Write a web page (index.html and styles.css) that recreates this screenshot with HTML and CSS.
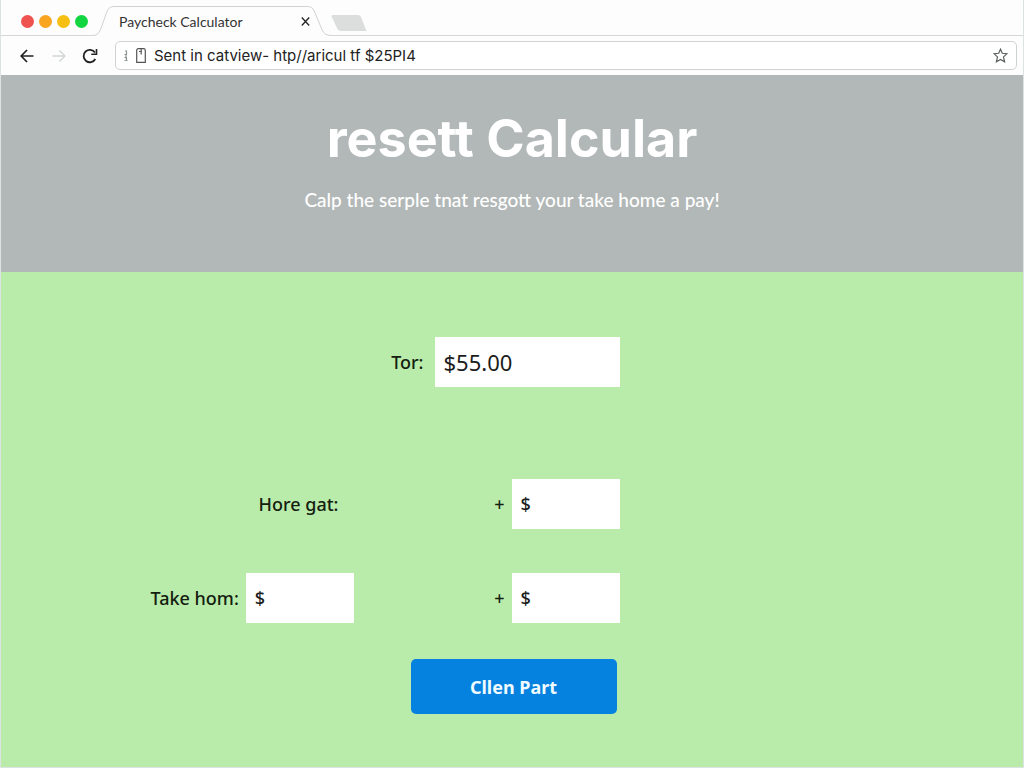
FILE: index.html
```html
<!DOCTYPE html>
<html lang="en">
<head>
<meta charset="utf-8">
<meta name="viewport" content="width=device-width, initial-scale=1">
<title>Paycheck Calculator</title>
<link rel="stylesheet" href="styles.css">
</head>
<body>
<div class="window">
  <div class="tabstrip">
    <div class="lights">
      <span class="light red"></span>
      <span class="light orange"></span>
      <span class="light yellow"></span>
      <span class="light green"></span>
    </div>
    <div class="tab">
      <svg class="tab-shape" viewBox="0 0 242 31" preserveAspectRatio="none" aria-hidden="true">
        <path d="M0 29.500C4 29.500 6 27 7.500 24L14 6Q16 .5 21 .5H218Q223 .5 225 5L233 24Q235.500 29.500 242 29.500V31H0Z" fill="#fdfdfd"/>
        <path d="M0 29.500C4 29.500 6 27 7.500 24L14 6Q16 .5 21 .5H218Q223 .5 225 5L233 24Q235.500 29.500 242 29.500" fill="none" stroke="#cfd1d1"/>
      </svg>
      <span class="tab-title">Paycheck Calculator</span>
      <button class="icon-button tab-close" type="button" aria-label="Close tab">
        <svg width="9" height="9" viewBox="0 0 9 9"><path d="M.8 .5 8.200 8.500M8.200 .5 .8 8.500" stroke="#222" stroke-width="1.300"/></svg>
      </button>
    </div>
    <button class="icon-button new-tab" type="button" aria-label="New tab">
      <svg width="36" height="16" viewBox="0 0 36 16"><path d="M2 0H27Q29 0 30 2L35.500 16H10Q7.500 16 6.500 14L.5 1.500Q0 0 2 0Z" fill="#dcdddd"/></svg>
    </button>
  </div>
  <div class="toolbar">
    <button class="icon-button" type="button" aria-label="Back">
      <svg width="14" height="14" viewBox="0 0 14 14"><path d="M13.500 7H1.500M7 1 1.200 7 7 13" fill="none" stroke="#222" stroke-width="1.700"/></svg>
    </button>
    <button class="icon-button forward" type="button" aria-label="Forward">
      <svg width="14" height="14" viewBox="0 0 14 14"><path d="M.5 7H12.500M7.500 1.500 12.800 7 7.500 12.500" fill="none" stroke="#d3d6d6" stroke-width="1.500"/></svg>
    </button>
    <button class="icon-button reload" type="button" aria-label="Reload">
      <svg width="16" height="16" viewBox="0 0 16 16"><path d="M13.300 11A6.200 6.200 0 1 1 13 4.600" fill="none" stroke="#222" stroke-width="1.800"/><path d="M14.500 1V6.200H9.300" fill="none" stroke="#222" stroke-width="1.600"/></svg>
    </button>
    <div class="address">
      <svg width="4" height="12" viewBox="0 0 4 12" aria-hidden="true"><path d="M1 1H2.500V4.500M2 4V8.500M2.500 8V11M.5 10.500H3.500M.5 4.500H3M.5 7.500H3" fill="none" stroke="#8d9496" stroke-width="1.200"/></svg>
      <svg width="10" height="15" viewBox="0 0 10 15" aria-hidden="true"><path d="M2.500 .7H7.500Q9.300 .7 9.300 2.500V14.300H.7V2.500Q.7 .7 2.500 .7Z" fill="none" stroke="#555" stroke-width="1.200"/><path d="M5.200 1V6.500M3 3.500H5" stroke="#555" stroke-width="1.200" fill="none"/></svg>
      <input class="url" type="text" aria-label="Address" value="Sent in catview- htp//aricul tf $25PI4">
      <button class="icon-button" type="button" aria-label="Bookmark">
        <svg width="15" height="15" viewBox="0 0 15 15"><path d="M7.500 1.200 9.300 5.300 14 5.700 10.500 8.900 11.600 13.700 7.500 11.400 3.400 13.700 4.500 8.900 1 5.700 5.700 5.300Z" fill="none" stroke="#5b5f60" stroke-width="1.200"/></svg>
      </button>
    </div>
  </div>
  <header class="hero">
    <h1 class="hero-title">resett Calcular</h1>
    <p class="hero-text">Calp the serple tnat resgott your take home a pay!</p>
  </header>
  <main class="content">
    <form class="form">
      <div class="row row-first">
        <label class="label" for="tor">Tor:</label>
        <input class="field field-wide" id="tor" type="text" value="$55.00">
      </div>
      <div class="row row-split row-second">
        <label class="label" for="gat">Hore gat:</label>
        <div class="group">
          <span class="label">+</span>
          <input class="field" id="gat" type="text" value="$">
        </div>
      </div>
      <div class="row row-split">
        <div class="group">
          <label class="label" for="take">Take hom:</label>
          <input class="field" id="take" type="text" value="$">
        </div>
        <div class="group">
          <label class="label" for="extra">+</label>
          <input class="field" id="extra" type="text" value="$">
        </div>
      </div>
      <button class="submit" type="button">Cllen Part</button>
    </form>
  </main>
</div>
</body>
</html>
```

FILE: styles.css
```css
* {
  box-sizing: border-box;
}

body {
  margin: 0;
  font-family: "Noto Sans", "Open Sans", sans-serif;
  color: #14200f;
}

.window {
  display: flex;
  flex-direction: column;
  min-height: 100vh;
  border: 1px solid #dde3e0;
  border-top: 0;
  background: #fdfdfd;
}

.icon-button {
  display: flex;
  padding: 0;
  border: 0;
  background: none;
}

.tabstrip {
  display: flex;
  height: 36px;
  padding: 6px 0 0 20px;
  border-bottom: 1px solid #d6d8d8;
}

.lights {
  display: flex;
  align-items: center;
  gap: 5px;
  width: 72px;
  height: 31px;
}

.light {
  width: 13px;
  height: 13px;
  border-radius: 50%;
}

.red { background: #ee5350; }
.orange { background: #f9a51f; }
.yellow { background: #f6c012; }
.green { background: #12d640; }

.tab {
  position: relative;
  display: flex;
  align-items: center;
  justify-content: space-between;
  width: 238px;
  height: 31px;
  padding: 0 21px 0 26px;
}

.tab-shape {
  position: absolute;
  inset: 0;
  width: 100%;
  height: 100%;
}

.tab-title {
  position: relative;
  font-family: Lato, sans-serif;
  font-size: 14px;
  color: #333;
}

.tab-close {
  position: relative;
}

.new-tab {
  align-items: center;
  height: 34px;
}

.toolbar {
  display: flex;
  align-items: center;
  height: 39px;
  padding: 0 6px 0 19px;
}

.forward {
  margin-left: 18px;
}

.reload {
  margin: 0 17px 0 16px;
}

.address {
  display: flex;
  flex: 1;
  align-items: center;
  gap: 8px;
  height: 29px;
  padding: 0 8px;
  border: 1px solid #d0d2d2;
  border-radius: 5px;
  background: #fff;
}

.url {
  flex: 1;
  min-width: 0;
  padding: 0;
  border: 0;
  background: none;
  font: 400 15px Inter, sans-serif;
  color: #222;
}

.hero {
  padding: 32px 16px 59px;
  background: #b2b8b7;
  color: #fff;
  text-align: center;
}

.hero-title {
  margin: 0;
  font: 700 52px/64px Inter, sans-serif;
}

.hero-text {
  margin: 16px 0 0;
  font: 500 19px/26px Lato, sans-serif;
}

.content {
  flex: 1;
  padding: 65px 16px 52px 19px;
  background: #b9ebab;
}

.form {
  display: flex;
  flex-direction: column;
  width: 100%;
  max-width: 726px;
  margin: 0 auto;
}

.row {
  display: flex;
  align-items: center;
  justify-content: flex-end;
  width: 65%;
  max-width: 469px;
  margin-bottom: 36px;
}

.row-first {
  gap: 11px;
  margin-bottom: 92px;
}

.row-split {
  justify-content: space-between;
}

.row-second {
  margin-bottom: 44px;
  padding-left: 108px;
}

.group {
  display: flex;
  align-items: center;
  gap: 7px;
}

.label {
  font-size: 18px;
  font-weight: 500;
}

.field {
  width: 108px;
  height: 50px;
  padding: 0 9px;
  border: 0;
  border-radius: 0;
  background: #fff;
  font: 500 18px "Noto Sans", sans-serif;
  color: #1c1c1c;
}

.field-wide {
  width: 185px;
  font: 400 22px "Noto Sans", sans-serif;
}

.submit {
  align-self: center;
  width: 206px;
  height: 55px;
  padding: 0;
  border: 0;
  border-radius: 5px;
  background: #0581e0;
  color: #f0fbff;
  font: 700 18px "Noto Sans", sans-serif;
}
```
